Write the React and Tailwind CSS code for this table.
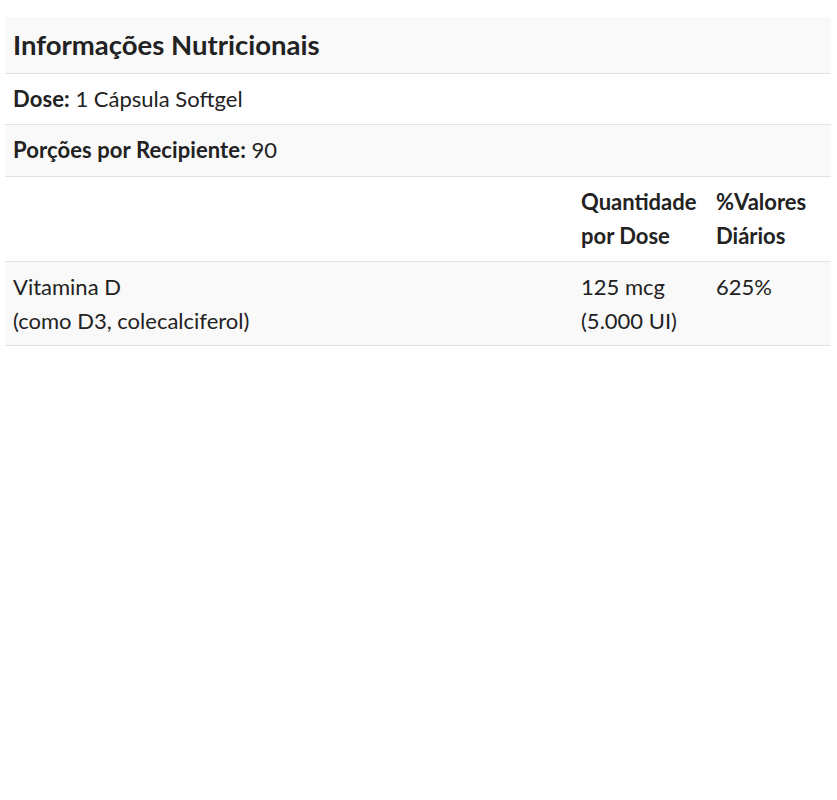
import React from 'react';

const rows = [
    { label: 'Dose:', value: '1 Cápsula Softgel', striped: false },
    { label: 'Porções por Recipiente:', value: '90', striped: true },
];

export default function App() {
    return (
        <div className="bg-white min-h-[800px] pt-[17px] px-[5px] font-['Lato',sans-serif] text-[#222]">
            <table className="w-[826px] border-collapse text-[22px] leading-[34px]">
                <tbody>
                    <tr className="bg-[#f9f9f9] border-b border-[#e2e2e2]">
                        <td colSpan={3} className="px-2 py-2 text-[27.5px] leading-[40px] font-bold">
                            Informações Nutricionais
                        </td>
                    </tr>
                    {rows.map((r) => (
                        <tr key={r.label} className={`border-b border-[#e2e2e2] ${r.striped ? 'bg-[#f9f9f9]' : 'bg-white'}`}>
                            <td colSpan={3} className={`px-2 pt-2 ${r.striped ? 'pb-[9px]' : 'pb-2'}`}>
                                <span className="font-bold tracking-[0.1px]">{r.label}</span> {r.value}
                            </td>
                        </tr>
                    ))}
                    <tr className="border-b border-[#e2e2e2] bg-white">
                        <td className="px-2 py-2 w-[568px]"></td>
                        <td className="px-2 py-2 w-[135px] font-bold align-top">
                            Quantidade<br />por Dose
                        </td>
                        <td className="px-2 py-2 font-bold align-top">
                            %Valores<br />Diários
                        </td>
                    </tr>
                    <tr className="border-b border-[#e2e2e2] bg-[#f9f9f9]">
                        <td className="px-2 pt-2 pb-[7px] align-top">
                            Vitamina D<br />(como D3, colecalciferol)
                        </td>
                        <td className="px-2 pt-2 pb-[7px] align-top">
                            125 mcg<br />(5.000 UI)
                        </td>
                        <td className="px-2 pt-2 pb-[7px] align-top">625%</td>
                    </tr>
                </tbody>
            </table>
        </div>
    );
}
